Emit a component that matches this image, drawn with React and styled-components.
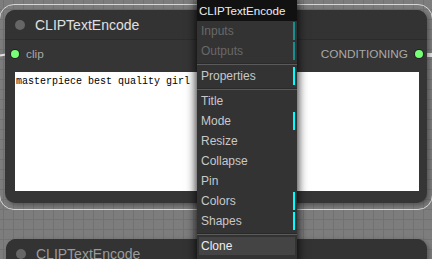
import React from "react";
import styled, { createGlobalStyle, css } from "styled-components";

const GlobalStyle = createGlobalStyle`
  html, body {
    margin: 0;
    padding: 0;
    background: #7c7c7c;
  }
  body {
    font-family: "Liberation Sans", Arial, sans-serif;
  }
`;

const menuItems = [
  { label: "Inputs", disabled: true, sub: true },
  { label: "Outputs", disabled: true, sub: true },
  { sep: true },
  { label: "Properties", sub: true },
  { sep: true },
  { label: "Title" },
  { label: "Mode", sub: true },
  { label: "Resize" },
  { label: "Collapse" },
  { label: "Pin" },
  { label: "Colors", sub: true },
  { label: "Shapes", sub: true },
  { sep: true },
  { label: "Clone", active: true }
];

export default function App() {
  return (
    <>
      <GlobalStyle />
      <Canvas>
        <Wire $x={0} $y={54} $w={6} $rot={-8} />
        <Wire $x={427} $y={53} $w={6} />
        <Wire $x={427} $y={55} $w={6} />

        <Node $x={5} $y={10} $w={422} $h={193} $selected>
          <TitleBar>
            <TitleDot />
            <TitleText>CLIPTextEncode</TitleText>
          </TitleBar>
          <SlotRow>
            <Slot>
              <SlotDot />
              <SlotLabel>clip</SlotLabel>
            </Slot>
            <Slot>
              <SlotLabel>CONDITIONING</SlotLabel>
              <SlotDot />
            </Slot>
          </SlotRow>
          <PromptBox>masterpiece best quality girl</PromptBox>
        </Node>

        <Node $x={6} $y={239} $w={421} $h={70}>
          <TitleBar>
            <TitleDot />
            <TitleText $dim>CLIPTextEncode</TitleText>
          </TitleBar>
        </Node>

        <Menu>
          <MenuTitle>CLIPTextEncode</MenuTitle>
          {menuItems.map((item, i) =>
            item.sep ? (
              <Separator key={i} />
            ) : (
              <Entry
                key={i}
                $disabled={item.disabled}
                $sub={item.sub}
                $active={item.active}
              >
                {item.label}
              </Entry>
            )
          )}
        </Menu>
      </Canvas>
    </>
  );
}

const Canvas = styled.div`
  position: relative;
  width: 432px;
  height: 259px;
  overflow: hidden;
  background-color: #7d7d7d;
  background-image: linear-gradient(#727272 1px, transparent 1px),
    linear-gradient(90deg, #727272 1px, transparent 1px);
  background-size: 10px 10px;
  background-position: 3px 9px;
`;

const Wire = styled.div`
  position: absolute;
  left: ${p => p.$x}px;
  top: ${p => p.$y}px;
  width: ${p => p.$w}px;
  height: 1.5px;
  background: #e6e6e6;
  transform: rotate(${p => p.$rot || 0}deg);
`;

const Node = styled.div`
  position: absolute;
  left: ${p => p.$x}px;
  top: ${p => p.$y}px;
  width: ${p => p.$w}px;
  height: ${p => p.$h}px;
  background: #353535;
  border-radius: 10px;
  box-shadow: 2px 2px 5px rgba(0, 0, 0, 0.35);
  display: flex;
  flex-direction: column;
  ${p =>
    p.$selected &&
    css`
      &::before {
        content: "";
        position: absolute;
        top: -6px;
        left: -6px;
        right: -6px;
        bottom: -7px;
        border: 1.5px solid #d6d6d6;
        border-radius: 15px;
        pointer-events: none;
      }
    `}
`;

const TitleBar = styled.div`
  height: 30px;
  flex-shrink: 0;
  display: flex;
  align-items: center;
  gap: 10px;
  padding-left: 10px;
  background: #333;
  border-radius: 10px 10px 0 0;
  border-bottom: 1px solid #2c2c2c;
  box-sizing: border-box;
`;

const TitleDot = styled.span`
  width: 10px;
  height: 10px;
  border-radius: 50%;
  background: #666;
`;

const TitleText = styled.span`
  font-size: 14px;
  color: ${p => (p.$dim ? "#9a9a9a" : "#e0e0e0")};
`;

const SlotRow = styled.div`
  height: 28px;
  display: flex;
  align-items: center;
  justify-content: space-between;
  padding: 0 4px 0 6px;
`;

const Slot = styled.div`
  display: flex;
  align-items: center;
  gap: 7px;
`;

const SlotDot = styled.span`
  width: 8px;
  height: 8px;
  border-radius: 50%;
  background: #7f7;
  box-shadow: 0 0 0 1px #222;
`;

const SlotLabel = styled.span`
  font-size: 11.8px;
  color: #a8a8a8;
`;

const PromptBox = styled.div`
  flex: 1;
  margin: 4px 8px 12px 10px;
  padding: 3px 1px;
  background: #fff;
  color: #000;
  font-family: "Liberation Mono", "Courier New", monospace;
  font-size: 10px;
  line-height: 13px;
`;

const Menu = styled.div`
  position: absolute;
  left: 197px;
  top: 0;
  width: 100px;
  display: flex;
  flex-direction: column;
  background: #333;
  box-shadow: 0 0 10px #000;
  font-size: 12px;
  padding-bottom: 8px;
`;

const MenuTitle = styled.div`
  height: 21px;
  line-height: 21px;
  padding-left: 2px;
  background: #111;
  color: #eee;
  font-size: 11.6px;
`;

const Entry = styled.div`
  height: 18px;
  line-height: 18px;
  margin: 1px 2px;
  padding-left: 2px;
  color: ${p => (p.$disabled ? "#686868" : p.$active ? "#eee" : "#c8c8c8")};
  background: ${p => (p.$active ? "#444" : "transparent")};
  border-right: 2px solid
    ${p => (p.$sub ? (p.$disabled ? "#188f8f" : "#0ff") : "transparent")};
`;

const Separator = styled.div`
  height: 0;
  margin: 2px 0 1px;
  border-top: 1px solid #2a2a2a;
  border-bottom: 1px solid #5a5a5a;
`;
